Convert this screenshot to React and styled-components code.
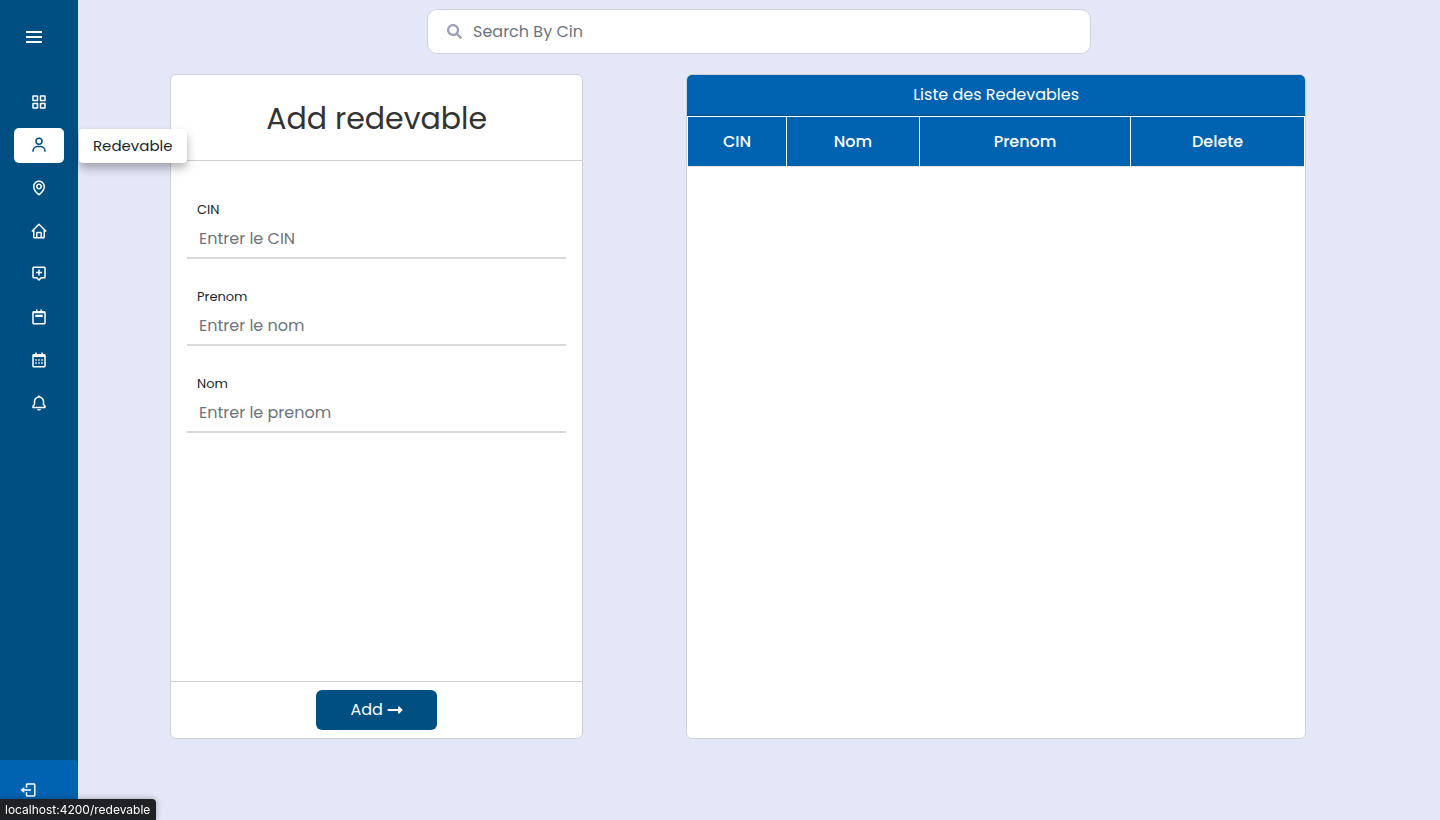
import React from "react";
import styled, { createGlobalStyle, css } from "styled-components";
import {
  BiMenu, BiGridAlt, BiUser, BiMap, BiHome, BiMessageAltAdd,
  BiCalendarWeek, BiCalendar, BiBell, BiLogOut,
} from "react-icons/bi";
import { FaSearch } from "react-icons/fa";

const color = {
  navy: "#004f83",
  blue: "#0063b1",
  page: "#e4e7f8",
  line: "#d0d1d5",
  text: "#212529",
  muted: "#6c757d",
};

const GlobalStyle = createGlobalStyle`
  *, *::before, *::after { box-sizing: border-box; }
  body {
    margin: 0;
    background: ${color.page};
    color: ${color.text};
    font-family: Poppins, Inter, sans-serif;
    font-size: 16px;
    line-height: 24px;
  }
  button, input { font: inherit; }
`;

const Layout = styled.div`
  display: flex;
  min-height: 100vh;
`;

const Sidebar = styled.aside`
  position: relative;
  z-index: 2;
  flex: none;
  display: flex;
  flex-direction: column;
  width: 78px;
  background: ${color.navy};
`;

const MenuButton = styled.button`
  display: flex;
  margin: 25px 0 0 22px;
  padding: 0;
  width: 24px;
  border: 0;
  background: none;
  color: #fff;
  font-size: 24px;
`;

const NavList = styled.ul`
  display: flex;
  flex-direction: column;
  gap: 8px;
  flex: 1;
  margin: 36px 14px 0;
  padding: 0;
  list-style: none;
`;

const NavItem = styled.li`
  position: relative;
`;

const NavLink = styled.a`
  display: flex;
  align-items: center;
  justify-content: center;
  height: 35px;
  padding-bottom: 1px;
  border-radius: 5px;
  color: #fff;
  font-size: 18px;
  ${({ $active }) => $active && css`
    background: #fff;
    color: ${color.navy};
  `}
`;

const Tooltip = styled.span`
  position: absolute;
  top: 1px;
  left: calc(100% + 15px);
  padding: 5px 14px;
  border-radius: 4px;
  background: #fff;
  box-shadow: 0 5px 10px rgba(0, 0, 0, 0.3);
  font-size: 15px;
`;

const Logout = styled.button`
  display: flex;
  align-items: center;
  height: 60px;
  padding: 0 19px;
  border: 0;
  border-radius: 0 5px 0 0;
  background: ${color.blue};
  color: #fff;
  font-size: 18px;
`;

const Main = styled.main`
  flex: 1;
  min-width: 0;
  padding-top: 9px;
`;

const SearchBox = styled.label`
  display: flex;
  align-items: center;
  gap: 11px;
  width: 49%;
  max-width: 664px;
  height: 45px;
  margin: 0 auto 20px;
  padding: 0 19px;
  border: 1px solid #ced4da;
  border-radius: 10px;
  background: #fff;
  color: #9ca3b8;
  font-size: 15px;
`;

const SearchInput = styled.input`
  flex: 1;
  min-width: 0;
  padding: 0;
  border: 0;
  outline: 0;
  background: none;
  color: ${color.text};
  font-size: 16px;
  &::placeholder { color: ${color.muted}; opacity: 1; }
`;

const Columns = styled.div`
  display: grid;
  grid-template-columns: 2fr 3fr;
  gap: 103px;
  min-height: calc(100vh - 155px);
  margin: 0 134px 0 92px;
`;

const Card = styled.section`
  display: flex;
  flex-direction: column;
  overflow: hidden;
  border: 1px solid ${color.line};
  border-radius: 6px;
  background: #fff;
`;

const FormCard = styled(Card).attrs({ as: "form" })``;

const FormTitle = styled.h1`
  margin: 0;
  padding: 24px 16px 21px;
  border-bottom: 1px solid ${color.line};
  color: #333;
  font-size: 30px;
  font-weight: 400;
  line-height: 40px;
  text-align: center;
`;

const Fields = styled.div`
  display: flex;
  flex-direction: column;
  gap: 28px;
  flex: 1;
  padding: 39px 16px 16px;
`;

const Field = styled.div`
  display: flex;
  flex-direction: column;
`;

const FieldLabel = styled.label`
  padding-left: 10px;
  font-size: 13px;
  line-height: 20px;
`;

const FieldInput = styled.input`
  height: 39px;
  padding: 0 12px;
  border: 0;
  border-bottom: 2px solid #d9d9d9;
  outline: 0;
  background: none;
  &::placeholder { color: ${color.muted}; opacity: 1; }
`;

const FormFooter = styled.footer`
  display: flex;
  justify-content: center;
  padding: 8px 16px;
  border-top: 1px solid ${color.line};
`;

const AddButton = styled.button`
  display: flex;
  align-items: center;
  justify-content: center;
  gap: 4px;
  width: 121px;
  height: 40px;
  border: 0;
  border-radius: 6px;
  background: ${color.navy};
  color: #fff;
  font-weight: 400;
`;

const ListTitle = styled.h2`
  margin: 0;
  padding: 8px 16px;
  border-bottom: 1px solid ${color.navy};
  background: ${color.blue};
  color: #fff;
  font-size: 16px;
  font-weight: 400;
  line-height: 24px;
  text-align: center;
`;

const Table = styled.table`
  width: 100%;
  border-collapse: collapse;
  table-layout: fixed;
`;

const HeadCell = styled.th`
  width: ${({ $width }) => $width};
  height: 50px;
  padding: 0;
  border: 1px solid #fff;
  border-bottom-color: #dee2e6;
  background: ${color.blue};
  color: #fff;
  font-weight: 500;
`;

const StatusBar = styled.div`
  position: fixed;
  bottom: 0;
  left: 0;
  z-index: 3;
  padding: 1px 6px 0 5px;
  border-radius: 0 4px 0 0;
  background: #202124;
  box-shadow: 0 0 6px rgba(0, 0, 0, 0.3);
  color: #fff;
  font-family: Inter, sans-serif;
  font-size: 12px;
  line-height: 20px;
`;

const navigation = [
  { label: "Dashboard", Icon: BiGridAlt },
  { label: "Redevable", Icon: BiUser, active: true },
  { label: "Secteur", Icon: BiMap },
  { label: "Local", Icon: BiHome },
  { label: "Taxe", Icon: BiMessageAltAdd },
  { label: "Trimestre", Icon: BiCalendarWeek },
  { label: "Annuel", Icon: BiCalendar },
  { label: "Notification", Icon: BiBell },
];

const fields = [
  { id: "cin", label: "CIN", hint: "Entrer le CIN" },
  { id: "prenom", label: "Prenom", hint: "Entrer le nom" },
  { id: "nom", label: "Nom", hint: "Entrer le prenom" },
];

const columns = [
  { name: "CIN", width: "16%" },
  { name: "Nom", width: "21.6%" },
  { name: "Prenom", width: "34.2%" },
  { name: "Delete", width: "28.2%" },
];

function Arrow() {
  return (
    <svg width="16" height="10" viewBox="0 0 16 10" fill="currentColor" aria-hidden="true">
      <path d="M1 4h10V2.2c0-.8.8-1.1 1.300-.6l3 2.800c.4.4.4.8 0 1.200l-3 2.800c-.5.5-1.300.2-1.300-.6V6H1c-.6 0-.6-2 0-2z" />
    </svg>
  );
}

export default function App() {
  return (
    <>
      <GlobalStyle />
      <Layout>
        <Sidebar>
          <MenuButton type="button" aria-label="Menu"><BiMenu /></MenuButton>
          <NavList>
            {navigation.map(({ label, Icon, active }) => (
              <NavItem key={label}>
                <NavLink href={`#${label.toLowerCase()}`} aria-label={label} $active={active}>
                  <Icon />
                </NavLink>
                {active && <Tooltip>{label}</Tooltip>}
              </NavItem>
            ))}
          </NavList>
          <Logout type="button" aria-label="Logout"><BiLogOut /></Logout>
        </Sidebar>
        <Main>
          <SearchBox>
            <FaSearch />
            <SearchInput type="text" placeholder="Search By Cin" aria-label="Search By Cin" />
          </SearchBox>
          <Columns>
            <FormCard>
              <FormTitle>Add redevable</FormTitle>
              <Fields>
                {fields.map(({ id, label, hint }) => (
                  <Field key={id}>
                    <FieldLabel htmlFor={id}>{label}</FieldLabel>
                    <FieldInput id={id} type="text" placeholder={hint} />
                  </Field>
                ))}
              </Fields>
              <FormFooter>
                <AddButton type="button">Add <Arrow /></AddButton>
              </FormFooter>
            </FormCard>
            <Card>
              <ListTitle>Liste des Redevables</ListTitle>
              <Table>
                <thead>
                  <tr>
                    {columns.map(({ name, width }) => (
                      <HeadCell key={name} scope="col" $width={width}>{name}</HeadCell>
                    ))}
                  </tr>
                </thead>
              </Table>
            </Card>
          </Columns>
        </Main>
      </Layout>
      <StatusBar>localhost:4200/redevable</StatusBar>
    </>
  );
}
